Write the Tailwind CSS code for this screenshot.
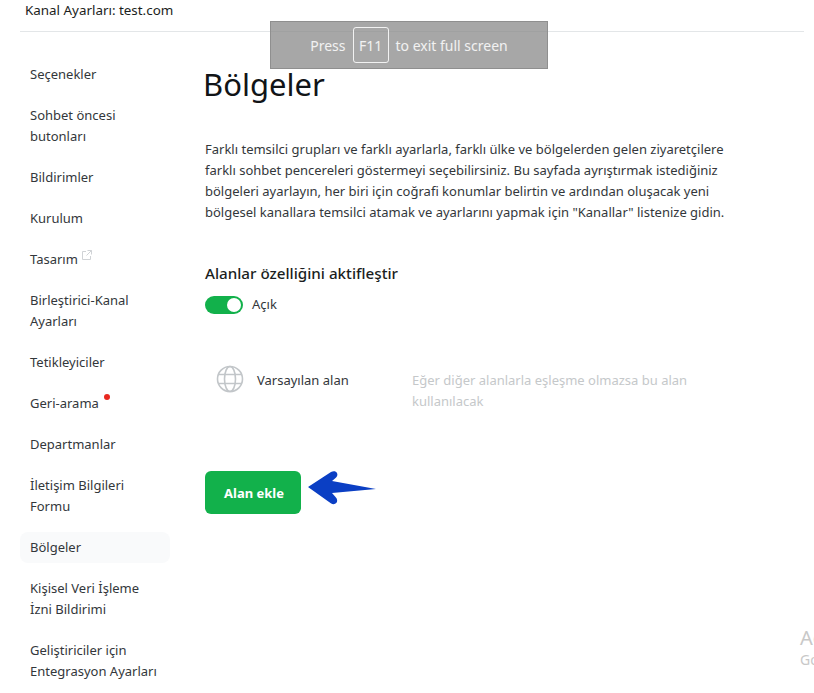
<!DOCTYPE html>
<html lang="en">
<head>
  <meta charset="UTF-8" />
  <meta name="viewport" content="width=device-width, initial-scale=1.0" />
  <title>Bölgeler</title>
  <script src="https://cdn.jsdelivr.net/npm/@tailwindcss/browser@4"></script>
</head>
<body class="relative h-[693px] w-[814px] overflow-hidden bg-white font-['Noto_Sans','Open_Sans',sans-serif] text-[13px] leading-[21px] text-[#33373b]">

  <!-- header -->
  <div class="ml-5 mr-[10px] h-8 border-b border-[#e3e6e8] pl-[5px]">
    <div class="text-[13.4px] text-[#1b1e21]">Kanal Ayarları: test.com</div>
  </div>

  <div class="flex">
    <!-- sidebar -->
    <nav class="ml-5 mt-[27px] flex w-[150px] shrink-0 flex-col gap-2.5">
      <a class="rounded-lg px-2.5 py-[5px]">Seçenekler</a>
      <a class="rounded-lg px-2.5 py-[5px]">Sohbet öncesi<br />butonları</a>
      <a class="rounded-lg px-2.5 py-[5px]">Bildirimler</a>
      <a class="rounded-lg px-2.5 py-[5px]">Kurulum</a>
      <a class="flex items-start gap-[4px] rounded-lg px-2.5 py-[5px]">
        Tasarım
        <svg class="mt-[1px] h-[10px] w-[10px] text-[#d0d3d6]" viewBox="0 0 10 10" fill="none" stroke="currentColor" stroke-width="1">
          <path d="M4 1.500H.5v8h8V6M5.500.5h4v4M9.500.5 4.500 5.500" />
        </svg>
      </a>
      <a class="rounded-lg px-2.5 py-[5px]">Birleştirici-Kanal<br />Ayarları</a>
      <a class="rounded-lg px-2.5 py-[5px]">Tetikleyiciler</a>
      <a class="flex items-start gap-[5px] rounded-lg px-2.5 py-[5px]">
        Geri-arama
        <span class="mt-[1px] h-1.5 w-1.5 rounded-full bg-[#e8281f]"></span>
      </a>
      <a class="rounded-lg px-2.5 py-[5px]">Departmanlar</a>
      <a class="rounded-lg px-2.5 py-[5px]">İletişim Bilgileri<br />Formu</a>
      <a class="rounded-lg bg-[#f9fafb] px-2.5 py-[5px]">Bölgeler</a>
      <a class="rounded-lg px-2.5 py-[5px]">Kişisel Veri İşleme<br />İzni Bildirimi</a>
      <a class="rounded-lg px-2.5 py-[5px]">Geliştiriciler için<br />Entegrasyon Ayarları</a>
    </nav>

    <!-- content -->
    <main class="ml-[35px] w-[540px] pt-[30px]">
      <h1 class="-ml-[2px] text-[31px] leading-[44px] text-[#111417]">Bölgeler</h1>
      <p class="mt-[33px] text-[13px] leading-[21px]">
        Farklı temsilci grupları ve farklı ayarlarla, farklı ülke ve bölgelerden gelen ziyaretçilere<br />
        farklı sohbet pencereleri göstermeyi seçebilirsiniz. Bu sayfada ayrıştırmak istediğiniz<br />
        bölgeleri ayarlayın, her biri için coğrafi konumlar belirtin ve ardından oluşacak yeni<br />
        bölgesel kanallara temsilci atamak ve ayarlarını yapmak için "Kanallar" listenize gidin.
      </p>

      <h2 class="mt-[39px] text-[15.2px] font-medium leading-[22px] text-[#1b1e21]">Alanlar özelliğini aktifleştir</h2>
      <div class="mt-[10px] flex items-center gap-[9px]">
        <span class="flex h-[18px] w-[38px] items-center justify-end rounded-full bg-[#12b14b] pr-[2px]">
          <span class="h-[14px] w-[14px] rounded-full bg-white"></span>
        </span>
        <span>Açık</span>
      </div>

      <div class="mt-[55px] flex items-start">
        <svg class="ml-[11px] mt-[-5px] h-[28px] w-[28px] shrink-0 text-[#c2c6c9]" viewBox="0 0 28 28" fill="none" stroke="currentColor" stroke-width="1.600">
          <circle cx="14" cy="14" r="12.500" />
          <ellipse cx="14" cy="14" rx="5.500" ry="12.500" />
          <path d="M2.500 9.500h23M2.500 18.500h23" />
        </svg>
        <span class="ml-[13px] w-[155px] shrink-0">Varsayılan alan</span>
        <span class="w-[300px] text-[#c5c8ca]">Eğer diğer alanlarla eşleşme olmazsa bu alan kullanılacak</span>
      </div>

      <button class="mt-[59px] h-[43px] w-[96px] rounded-md bg-[#12b14b] pl-[2px] pt-[2px] text-[13px] font-bold text-white">Alan ekle</button>
    </main>
  </div>

  <!-- annotation arrow -->
  <svg class="absolute left-[306px] top-[470px] h-[38px] w-[72px]" viewBox="0 0 72 38">
    <path d="M2 17 25 2c2.500-1.500 5-1 6 1 1 2.200 0 4-2 5.500l-3 2.500 44 8-44 4 3.500 4c2 2 2.200 4.500.8 6-1.500 1.500-3.500 1.500-5.500.2Z" fill="#0b3fc4" />
  </svg>

  <!-- fullscreen notice -->
  <div class="absolute left-[270px] top-[21px] flex h-[48px] w-[278px] items-center justify-center gap-[7px] border border-[#8f8f8f] bg-[#8a8a8a]/75 text-[14px] text-white/85">
    <span>Press</span>
    <span class="flex h-[36px] w-[36px] items-center justify-center rounded-[3px] border border-white/85">F11</span>
    <span>to exit full screen</span>
  </div>

  <!-- windows watermark, cut off by the edge -->
  <div class="absolute left-[800px] top-[626px] text-[20px] leading-[24px] text-[#c8c8c8]">Ac</div>
  <div class="absolute left-[800px] top-[650px] text-[14px] leading-[20px] text-[#c8c8c8]">Go</div>
</body>
</html>
